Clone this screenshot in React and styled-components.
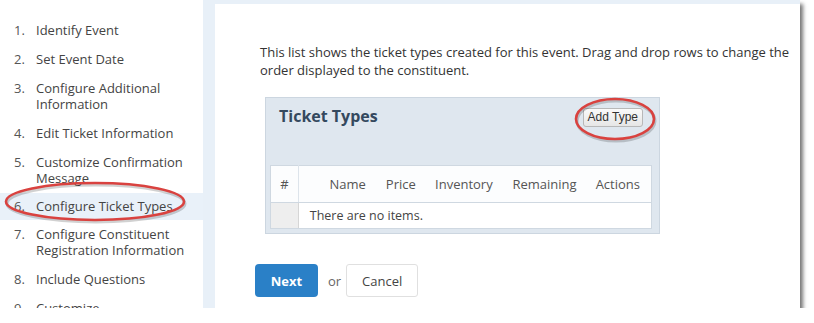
import React from "react";
import styled, { createGlobalStyle } from "styled-components";

const Global = createGlobalStyle`
  html, body { margin: 0; padding: 0; background: #fff; }
  body { font-family: "Open Sans", "Noto Sans", sans-serif; color: #444; }
  * { box-sizing: border-box; }
`;

const Frame = styled.div`
  position: relative;
  width: 800px;
  height: 308px;
  display: flex;
  overflow: hidden;
  box-shadow: 3px 4px 4px rgba(0,0,0,0.55);
  background: #fff;
`;

const Sidebar = styled.ol`
  list-style: none;
  margin: 0;
  padding: 16px 0 0 0;
  width: 203px;
  flex: none;
  background: #fff;
`;

const Step = styled.li`
  display: flex;
  padding: ${p => (p.$active ? "5px 8px 6px 14px" : "6px 8px 7px 14px")};
  font-size: 13px;
  line-height: 16px;
  color: #444;
  background: ${p => (p.$active ? "#e9f1f9" : "transparent")};
`;

const Num = styled.span`
  width: 22px;
  flex: none;
  color: #555;
`;

const Main = styled.div`
  flex: 1;
  background: #e8f0f8;
  padding: 4px 0 0 12px;
  display: flex;
`;

const Content = styled.div`
  flex: 1;
  background: #fff;
  padding: 39px 10px 0 45px;
`;

const Intro = styled.p`
  margin: 0;
  font-size: 13px;
  line-height: 18px;
  color: #333;
  max-width: 540px;
`;

const Panel = styled.div`
  margin: 18px 0 0 5px;
  width: 395px;
  background: #dfe7ef;
  border: 1px solid #ccd6e0;
  padding: 0 7px 4px 4px;
`;

const PanelHead = styled.div`
  height: 67px;
  display: flex;
  justify-content: space-between;
  align-items: flex-start;
  padding: 8px 9px 0 9px;
`;

const Title = styled.h2`
  margin: 0;
  font-size: 16px;
  line-height: 20px;
  font-weight: 700;
  color: #34495e;
`;

const SmallButton = styled.button`
  margin-top: 2px;
  font-family: "Liberation Sans", Arial, sans-serif;
  font-size: 12px;
  line-height: 17px;
  padding: 0 4px;
  color: #333;
  background: linear-gradient(#fafafa, #e6e6e6);
  border: 1px solid #b8b8b8;
  border-radius: 3px;
`;

const Table = styled.table`
  width: 382px;
  border-collapse: collapse;
  background: #fff;
  font-size: 13px;
  color: #555;
`;

const Th = styled.th`
  height: 37px;
  width: ${p => p.$w}px;
  font-weight: 400;
  text-align: ${p => p.$align || "right"};
  padding: 0 ${p => p.$pr ?? 10}px 0 0;
  border-top: 1px solid #cfd8e1;
  border-bottom: 1px solid #cfd8e1;
  border-left: ${p => (p.$first ? "1px solid #cfd8e1" : "none")};
  border-right: ${p => (p.$sep ? "1px solid #dde4eb" : p.$last ? "1px solid #cfd8e1" : "none")};
  background: #fcfdfe;
`;

const HandleCell = styled.td`
  height: 26px;
  background: #eeeeee;
  border: 1px solid #cfd8e1;
  border-right: 1px solid #d6d6d6;
`;

const EmptyCell = styled.td`
  padding-left: 11px;
  border: 1px solid #cfd8e1;
  border-left: none;
  color: #444;
  font-size: 12.5px;
`;

const Actions = styled.div`
  margin-top: 30px;
  display: flex;
  align-items: center;
  gap: 10px;
  margin-left: -5px;
`;

const Primary = styled.button`
  width: 63px;
  height: 33px;
  border: none;
  border-radius: 4px;
  background: #2a80c7;
  color: #fff;
  font-family: "Open Sans", sans-serif;
  font-weight: 700;
  font-size: 13px;
`;

const Or = styled.span`
  font-size: 13px;
  color: #666;
  margin-right: -5px;
`;

const Secondary = styled.button`
  width: 72px;
  height: 33px;
  border: 1px solid #e0e0e0;
  border-radius: 3px;
  background: #fff;
  color: #444;
  font-family: "Open Sans", sans-serif;
  font-size: 13px;
`;

const Callout = styled.svg`
  position: absolute;
  overflow: visible;
  pointer-events: none;
`;

const Ellipse = ({ x, y, w, h }) => (
  <Callout style={{ left: x, top: y, width: w, height: h }} viewBox={`0 0 ${w} ${h}`}>
    <ellipse cx={w / 2 + 1} cy={h / 2 + 2} rx={w / 2 - 2} ry={h / 2 - 2} fill="none" stroke="rgba(0,0,0,0.18)" strokeWidth="3" />
    <ellipse cx={w / 2} cy={h / 2} rx={w / 2 - 2} ry={h / 2 - 2} fill="none" stroke="#d9423f" strokeWidth="2.6" />
  </Callout>
);

const steps = [
  "Identify Event",
  "Set Event Date",
  "Configure Additional Information",
  "Edit Ticket Information",
  "Customize Confirmation Message",
  "Configure Ticket Types",
  "Configure Constituent Registration Information",
  "Include Questions",
  "Customize",
];

export default function App() {
  return (
    <>
      <Global />
      <Frame>
        <Sidebar>
          {steps.map((s, i) => (
            <Step key={s} $active={i === 5}>
              <Num>{i + 1}.</Num>
              <span>{s}</span>
            </Step>
          ))}
        </Sidebar>
        <Main>
          <Content>
            <Intro>
              This list shows the ticket types created for this event. Drag and drop rows to change the order displayed to the constituent.
            </Intro>
            <Panel>
              <PanelHead>
                <Title>Ticket Types</Title>
                <SmallButton>Add Type</SmallButton>
              </PanelHead>
              <Table>
                <thead>
                  <tr>
                    <Th $w={28} $align="center" $pr={0} $first $sep>#</Th>
                    <Th $w={78}>Name</Th>
                    <Th $w={50}>Price</Th>
                    <Th $w={77}>Inventory</Th>
                    <Th $w={84}>Remaining</Th>
                    <Th $w={65} $pr={11} $last>Actions</Th>
                  </tr>
                </thead>
                <tbody>
                  <tr>
                    <HandleCell />
                    <EmptyCell colSpan={5}>There are no items.</EmptyCell>
                  </tr>
                </tbody>
              </Table>
            </Panel>
            <Actions>
              <Primary>Next</Primary>
              <Or>or</Or>
              <Secondary>Cancel</Secondary>
            </Actions>
          </Content>
        </Main>
        <Ellipse x={4} y={181} w={182} h={41} />
        <Ellipse x={574} y={97} w={82} h={44} />
      </Frame>
    </>
  );
}
